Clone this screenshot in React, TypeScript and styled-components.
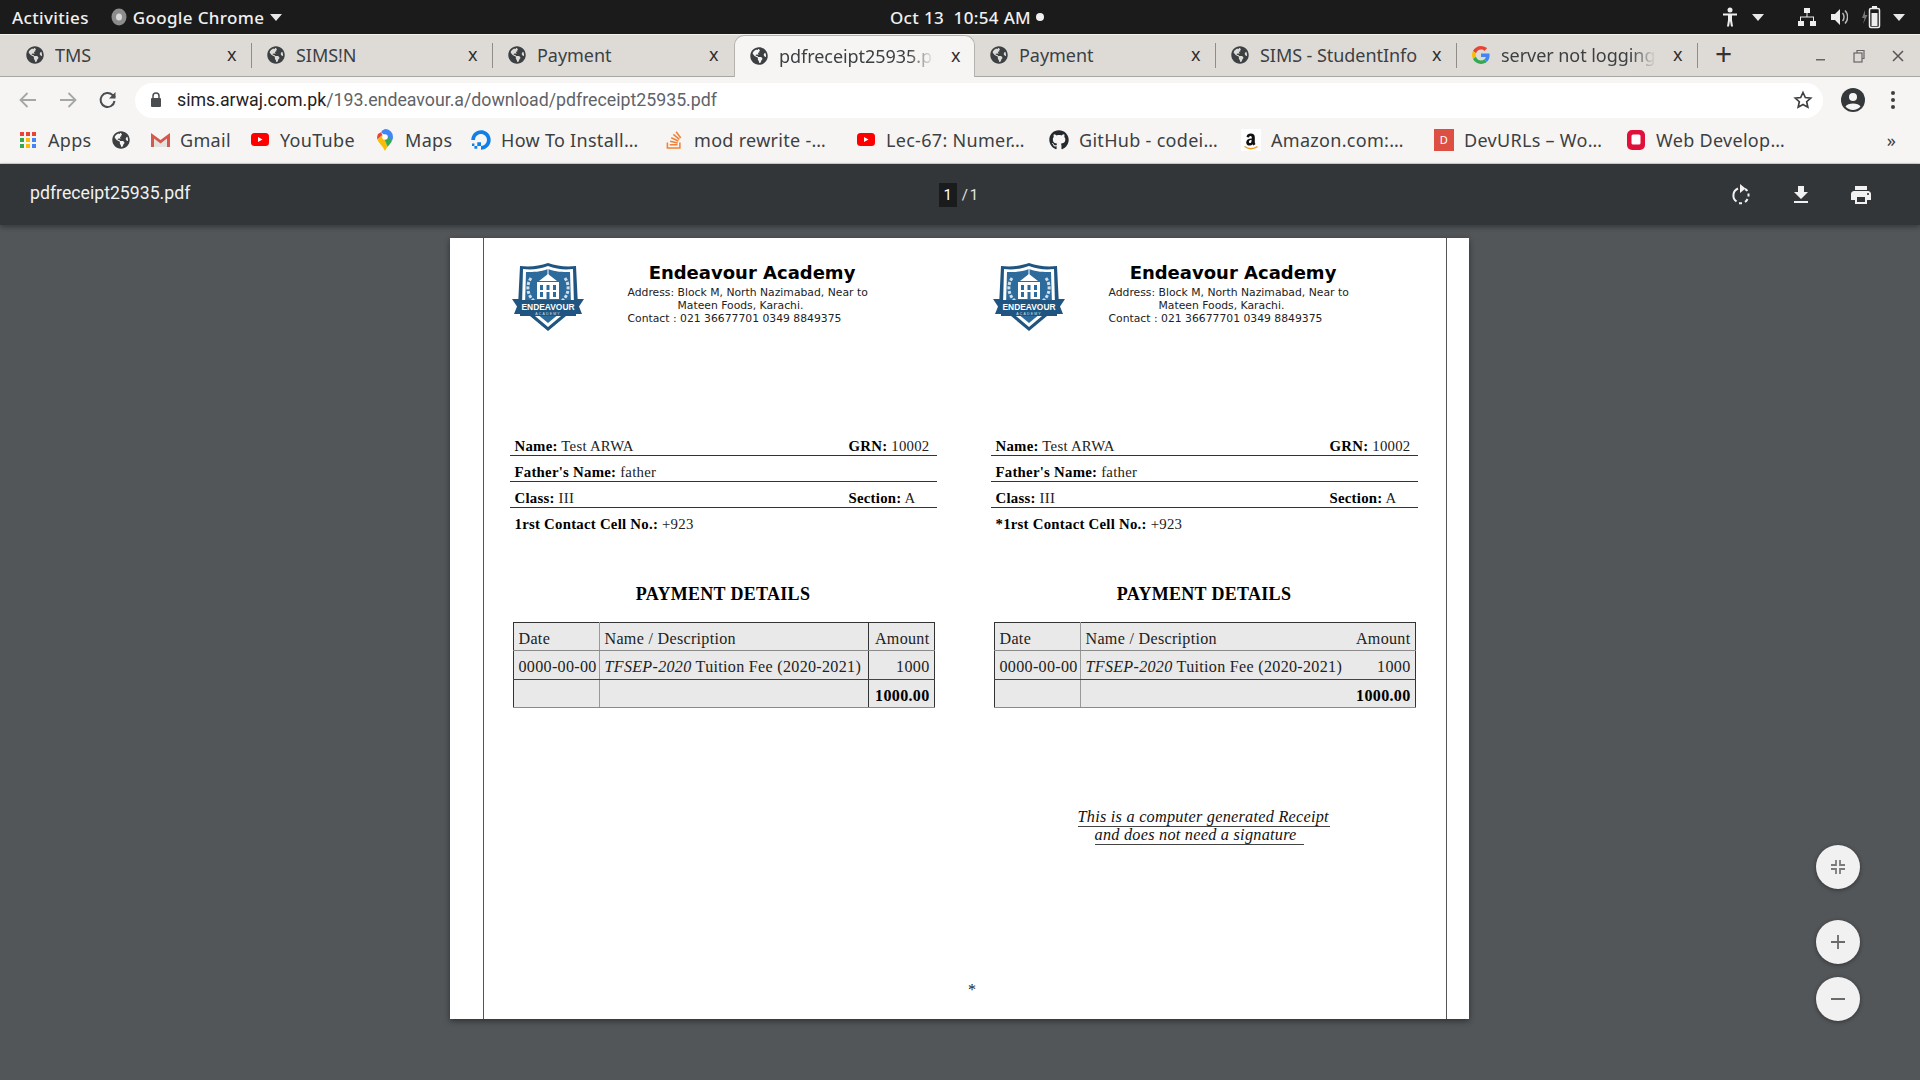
import React from 'react';
import styled, { createGlobalStyle } from 'styled-components';
import { FaDigitalOcean, FaGithub, FaGlobeAmericas, FaStackOverflow } from 'react-icons/fa';

const GlobalStyle = createGlobalStyle`
  html, body { margin: 0; padding: 0; height: 100%; }
  body { background: #525659; font-family: "Noto Sans", sans-serif; overflow: hidden; }
  #root { height: 100%; }
`;

const Screen = styled.div`
  width: 1920px;
  height: 1080px;
  display: flex;
  flex-direction: column;
  position: relative;
  overflow: hidden;
`;

// Ubuntu top bar
const TopBar = styled.div`
  height: 34px;
  background: #1b1b1b;
  color: #f0f0f0;
  display: grid;
  grid-template-columns: 1fr auto 1fr;
  align-items: center;
  font-family: "Noto Sans", sans-serif;
  font-size: 17px;
  letter-spacing: 0.35px;
  font-weight: 500;
  flex: none;
`;
const TopLeft = styled.div`
  display: flex;
  align-items: center;
  padding-left: 12px;
`;
const TopApp = styled.div`
  display: flex;
  align-items: center;
  gap: 6px;
  margin-left: 22px;
`;
const Clock = styled.div`
  display: flex;
  align-items: center;
  gap: 5px;
  padding-left: 14px;
`;
const RecordDot = styled.span`
  width: 8px;
  height: 8px;
  border-radius: 50%;
  background: #f0f0f0;
`;
const TopRight = styled.div`
  display: flex;
  justify-content: flex-end;
  align-items: center;
  padding-right: 15px;
`;
const Tray = styled.span<{ $gap: number }>`
  display: inline-flex;
  margin-left: ${(p) => p.$gap}px;
`;
const Caret = styled.span`
  width: 0;
  height: 0;
  border-left: 6px solid transparent;
  border-right: 6px solid transparent;
  border-top: 7px solid #e8e8e8;
`;

// Chrome tab strip
const TabStrip = styled.div`
  height: 43px;
  background: #dedbd7;
  border-top: 1px solid #f3f1ee;
  border-bottom: 1px solid #a9a7a3;
  box-sizing: border-box;
  display: flex;
  align-items: stretch;
  padding-left: 11px;
  flex: none;
`;
const Tab = styled.div<{ $active?: boolean; $sep?: boolean }>`
  width: 241px;
  box-sizing: border-box;
  display: flex;
  align-items: center;
  position: relative;
  padding: 0 0 2px 15px;
  color: #3c4043;
  font-size: 18px;
  letter-spacing: -0.05px;
  background: ${(p) => (p.$active ? '#f6f5f3' : 'transparent')};
  border-radius: ${(p) => (p.$active ? '10px 10px 0 0' : '0')};
  margin-bottom: ${(p) => (p.$active ? '-1px' : '0')};
  border: ${(p) => (p.$active ? '1px solid #b5b3af' : 'none')};
  border-bottom: none;
  ${(p) =>
    p.$sep
      ? `&::after {
    content: '';
    position: absolute;
    right: 0;
    top: 8px;
    bottom: 8px;
    width: 1px;
    background: #8f8d8a;
  }`
      : ''}
`;
const TabTitle = styled.span<{ $fade?: boolean }>`
  margin-left: 11px;
  width: 158px;
  overflow: hidden;
  white-space: nowrap;
  ${(p) =>
    p.$fade
      ? `-webkit-mask-image: linear-gradient(to right, #000 82%, transparent 98%);
  mask-image: linear-gradient(to right, #000 82%, transparent 98%);`
      : ''}
`;
const TabClose = styled.span`
  position: absolute;
  left: 216px;
  top: 8px;
  font-size: 18px;
  line-height: 22px;
  color: #2e2e2e;
`;
const NewTab = styled.div`
  margin-left: 17px;
  font-size: 30px;
  line-height: 38px;
  color: #333;
`;
const WindowButtons = styled.div`
  margin-left: auto;
  display: flex;
  align-items: center;
  gap: 25px;
  padding-right: 15px;
  color: #555;
`;

// Address bar
const Toolbar = styled.div`
  height: 41px;
  background: #f6f5f3;
  display: flex;
  align-items: center;
  padding-top: 5px;
  box-sizing: border-box;
  flex: none;
`;
const NavButton = styled.span<{ $w: number }>`
  width: ${(p) => p.$w}px;
  display: inline-flex;
  justify-content: center;
  flex: none;
`;
const Omnibox = styled.div`
  width: 1688px;
  height: 35px;
  border-radius: 18px;
  background: #ffffff;
  display: flex;
  align-items: center;
  box-sizing: border-box;
  padding: 0 10px 0 15px;
  font-family: "Roboto", sans-serif;
  font-size: 17.75px;
  color: #5f6368;
  white-space: nowrap;
  flex: none;
`;
const Host = styled.span`
  color: #1f2124;
  margin-left: 15px;
`;
const OmniStar = styled.span`
  margin-left: auto;
  display: inline-flex;
`;

// Bookmarks
const BookmarkBar = styled.div`
  height: 46px;
  background: #f6f5f3;
  border-bottom: 1px solid #d5d3cf;
  box-sizing: border-box;
  display: flex;
  align-items: center;
  padding: 0 0 2px 18px;
  flex: none;
`;
const Bookmark = styled.div<{ $w: number }>`
  width: ${(p) => p.$w}px;
  display: flex;
  align-items: center;
  gap: 10px;
  font-size: 18px;
  letter-spacing: 0.3px;
  color: #3c4043;
  white-space: nowrap;
  flex: none;
`;
const IconSlot = styled.span`
  width: 20px;
  height: 20px;
  display: inline-flex;
  align-items: center;
  justify-content: center;
  flex: none;
`;
const DevIcon = styled.span`
  width: 20px;
  height: 22px;
  background: #dd4f43;
  color: #fff;
  font-size: 11px;
  display: inline-flex;
  align-items: center;
  justify-content: center;
`;
const MoreBookmarks = styled.div`
  margin-left: auto;
  padding-right: 24px;
  font-size: 18px;
  color: #3c4043;
`;

// PDF viewer
const PdfBar = styled.div`
  height: 61px;
  background: #323639;
  color: #f1f1f1;
  display: grid;
  grid-template-columns: 1fr auto 1fr;
  align-items: center;
  box-shadow: 0 2px 5px rgba(0, 0, 0, 0.35);
  position: relative;
  z-index: 2;
  flex: none;
`;
const PdfTitle = styled.div`
  font-family: "Roboto", sans-serif;
  font-size: 17.7px;
  padding-left: 30px;
  margin-top: -3px;
`;
const PageCount = styled.div`
  display: flex;
  align-items: center;
  gap: 5px;
  padding-right: 3px;
  font-family: "Roboto", sans-serif;
  font-size: 15px;
  word-spacing: -2px;
  color: #e4e4e4;
`;
const PageCurrent = styled.span`
  background: #191b1d;
  width: 18px;
  height: 24px;
  display: inline-flex;
  align-items: center;
  justify-content: center;
  color: #fff;
`;
const PdfActions = styled.div`
  display: flex;
  justify-content: flex-end;
  gap: 36px;
  padding-right: 47px;
`;
const Viewer = styled.div`
  flex: 1;
  background: #525659;
  display: flex;
  justify-content: center;
  padding: 13px 2px 0 0;
  min-height: 0;
`;
const Sheet = styled.div`
  width: 1019px;
  height: 781px;
  background: #fff;
  box-shadow: 0 2px 6px rgba(0, 0, 0, 0.45);
  box-sizing: border-box;
  padding: 0 22px 0 33px;
  flex: none;
`;
const Frame = styled.div`
  height: 100%;
  box-sizing: border-box;
  border-left: 1px solid #555;
  border-right: 1px solid #555;
  padding: 25px 27px 0 26px;
  display: flex;
  flex-direction: column;
`;
const Columns = styled.div`
  display: grid;
  grid-template-columns: 427px 427px;
  column-gap: 54px;
`;
const Column = styled.div`
  display: flex;
  flex-direction: column;
`;
const Letterhead = styled.div`
  height: 167px;
  display: flex;
  align-items: flex-start;
  padding-left: 2px;
`;
const LetterText = styled.div`
  margin-left: 44px;
  width: 249px;
  font-family: "DejaVu Sans", sans-serif;
  color: #222;
  font-size: 10.8px;
  line-height: 13px;
`;
const School = styled.div`
  font-size: 18px;
  font-weight: 700;
  line-height: 21px;
  color: #000;
  text-align: center;
  margin: -1px 0 3px;
`;
const AddressLine = styled.div<{ $indent?: number }>`
  padding-left: ${(p) => p.$indent ?? 0}px;
  white-space: nowrap;
`;
const InfoRow = styled.div<{ $rule?: boolean }>`
  height: 26px;
  box-sizing: border-box;
  display: flex;
  justify-content: space-between;
  align-items: center;
  padding: 7px 0 0 5px;
  border-bottom: ${(p) => (p.$rule ? '1.5px solid #333' : 'none')};
  font-family: "Liberation Serif", serif;
  font-size: 14.8px;
  letter-spacing: 0.25px;
  color: #222;
`;
const InfoRight = styled.span`
  width: 88px;
  white-space: nowrap;
`;
const Strong = styled.b`
  color: #000;
`;
const DetailsTitle = styled.h2`
  margin: 47px 0 0;
  height: 26px;
  line-height: 26px;
  text-align: center;
  font-family: "Liberation Serif", serif;
  font-size: 18px;
  font-weight: 700;
  letter-spacing: 0.3px;
  color: #000;
`;
const Payments = styled.table`
  margin: 15px 0 0 3px;
  width: 421px;
  height: 86px;
  border-collapse: collapse;
  table-layout: fixed;
  background: #e9e9e9;
  border: 1.5px solid #333;
  font-family: "Liberation Serif", serif;
  font-size: 16.1px;
  letter-spacing: 0.3px;
  color: #222;
`;
const Cell = styled.td<{ $right?: boolean; $divider?: 'none' | 'light' | 'dark'; $lastRow?: boolean }>`
  padding: 5px 4px 0 5px;
  white-space: nowrap;
  text-align: ${(p) => (p.$right ? 'right' : 'left')};
  border-left: ${(p) =>
    p.$divider === 'none' ? 'none' : `1px solid ${p.$divider === 'dark' ? '#333' : '#999'}`};
  border-bottom: 1px solid ${(p) => (p.$lastRow ? '#444' : '#8a8a8a')};
`;
const Note = styled.div`
  margin: 101px 0 0 87px;
  width: 252px;
  font-family: "Liberation Serif", serif;
  font-style: italic;
  font-size: 16.25px;
  letter-spacing: 0.25px;
  color: #111;
`;
const NoteLine = styled.div<{ $w: number; $indent: number }>`
  width: ${(p) => p.$w}px;
  margin-left: ${(p) => p.$indent}px;
  height: 18px;
  line-height: 17px;
  box-sizing: border-box;
  border-bottom: 1.5px solid #444;
  white-space: nowrap;
`;
const Star = styled.div`
  margin-top: auto;
  margin-bottom: 20px;
  padding-left: 16px;
  text-align: center;
  font-family: "Liberation Serif", serif;
  font-size: 16px;
  color: #222;
`;

// Zoom buttons float over the viewer
const Fab = styled.div<{ $top: number }>`
  position: absolute;
  left: 1816px;
  top: ${(p) => p.$top}px;
  width: 44px;
  height: 44px;
  border-radius: 50%;
  background: #f1f1f1;
  box-shadow: 0 1px 4px rgba(0, 0, 0, 0.4);
  display: flex;
  align-items: center;
  justify-content: center;
`;

const Globe = () => <FaGlobeAmericas size={18} color="#3c4043" />;

const GoogleG = () => (
  <svg width="18" height="18" viewBox="0 0 48 48">
    <path fill="#EA4335" d="M24 9.5c3.5 0 6.7 1.2 9.2 3.6l6.9-6.9C35.9 2.4 30.5 0 24 0 14.6 0 6.5 5.4 2.6 13.2l8 6.2C12.5 13.7 17.8 9.5 24 9.5z" />
    <path fill="#4285F4" d="M46.9 24.5c0-1.6-.1-3.1-.4-4.5H24v9h12.9c-.6 3-2.2 5.5-4.7 7.2l7.7 6c4.5-4.2 7-10.3 7-17.7z" />
    <path fill="#FBBC05" d="M10.5 28.6c-.5-1.4-.8-3-.8-4.6s.3-3.2.8-4.6l-8-6.2C.9 16.5 0 20.1 0 24s.9 7.5 2.6 10.8l7.9-6.2z" />
    <path fill="#34A853" d="M24 48c6.5 0 11.9-2.1 15.9-5.8l-7.7-6c-2.1 1.4-4.9 2.3-8.2 2.3-6.2 0-11.5-4.2-13.4-9.9l-8 6.2C6.5 42.6 14.6 48 24 48z" />
  </svg>
);

const AppsGrid = () => {
  const colors = ['#ea4335', '#ea4335', '#ea4335', '#34a853', '#fbbc05', '#4285f4', '#34a853', '#fbbc05', '#4285f4'];
  return (
    <svg width="16" height="16" viewBox="0 0 16 16">
      {colors.map((c, i) => (
        <rect key={i} x={(i % 3) * 6} y={Math.floor(i / 3) * 6} width="4" height="4" fill={c} />
      ))}
    </svg>
  );
};

const GmailIcon = () => (
  <svg width="19" height="14" viewBox="0 0 19 14">
    <path d="M3 14V3l6.500 5L16 3v11z" fill="#e4e2df" />
    <path d="M0 14V0l9.500 7L19 0v14h-3V5.500L9.500 10.500 3 5.500V14z" fill="#d6584c" />
  </svg>
);

const YouTubeIcon = () => (
  <svg width="18" height="13" viewBox="0 0 18 13">
    <rect width="18" height="13" rx="3.500" fill="#f00" />
    <path d="M7 4v5l4.500-2.500z" fill="#fff" />
  </svg>
);

const MapsIcon = () => (
  <svg width="16" height="22" viewBox="0 0 16 22">
    <path d="M8 0a8 8 0 0 1 8 8c0 1.400-.4 2.600-1 3.700L4 3.200A8 8 0 0 1 8 0z" fill="#4285f4" />
    <path d="M4 3.200 1 5a8 8 0 0 0-.6 5.500l5-4.500z" fill="#ea4335" />
    <path d="M.4 10.500C1.400 14 6 17 8 22c.6-1.600 1.600-3 2.600-4.300L5.500 6z" fill="#fbbc05" />
    <path d="M10.600 17.700c1.800-2 3.600-3.800 4.400-6L10 6 5.500 6z" fill="#34a853" />
    <circle cx="8" cy="8" r="2.800" fill="#fff" />
  </svg>
);

const AmazonIcon = () => (
  <svg width="20" height="22" viewBox="0 0 20 22">
    <rect width="20" height="22" fill="#fff" />
    <path d="M5.500 8c.4-2.400 2-3.400 4.300-3.400 2.700 0 4 1.200 4 3.600v5.300c0 .7.300 1 .7 1.500l-1.800 1.500c-.5-.4-.8-.8-1-1.300-1.100 1-2 1.400-3.200 1.400-2 0-3.300-1.200-3.300-3.200 0-2.600 2.100-3.600 5.600-3.900v-.5c0-1.200-.4-1.900-1.300-1.900-.8 0-1.300.6-1.500 1.300zm5 2.800c-1.600.2-2.600.8-2.600 2 0 .8.400 1.300 1.100 1.300.9 0 1.500-.9 1.500-2.200z" fill="#111" />
    <path d="M3.500 17.500c3.800 2.600 9 2.600 13 .2" fill="none" stroke="#f39a1f" strokeWidth="1.500" />
  </svg>
);

const WebDevIcon = () => (
  <svg width="20" height="22" viewBox="0 0 20 22">
    <rect x="1" y="1" width="18" height="20" rx="5" fill="#e0103a" />
    <rect x="5.500" y="5.500" width="9" height="10" rx="1.500" fill="#fff" />
  </svg>
);

const Shield = () => (
  <svg width="72" height="68" viewBox="0 0 72 68">
    <path d="M36 0c9 3 17 4 28 3l2 40-30 25L6 43 8 3c11 1 19 0 28-3z" fill="#1f5580" />
    <path d="M36 3c8 3 16 4 25 3l1 36-26 22-26-22 1-36c9 1 17 0 25-3z" fill="#fff" />
    <path d="M36 6c8 3 14 3 22 3l1 32-23 19-23-19 1-32c8 0 14 0 22-3z" fill="#2d6b9c" />
    <path d="M19 15c-5 7-4 17 3 23M53 15c5 7 4 17-3 23" fill="none" stroke="#cfe0ec" strokeWidth="3" strokeDasharray="3 1.500" />
    <path d="M36 11l9 7H27z" fill="#fff" />
    <rect x="35.500" y="6" width="1" height="6" fill="#fff" />
    <rect x="25" y="19" width="22" height="17" fill="#fff" />
    <rect x="28" y="22" width="3" height="5" fill="#2d6b9c" />
    <rect x="34.500" y="22" width="3" height="5" fill="#2d6b9c" />
    <rect x="41" y="22" width="3" height="5" fill="#2d6b9c" />
    <rect x="28" y="29" width="3" height="5" fill="#2d6b9c" />
    <rect x="34.500" y="29" width="3" height="7" fill="#2d6b9c" />
    <rect x="41" y="29" width="3" height="5" fill="#2d6b9c" />
    <path d="M0 36h8l2 4v11H2l3-7.500z" fill="#1f5580" />
    <path d="M72 36h-8l-2 4v11h8l-3-7.500z" fill="#1f5580" />
    <rect x="8" y="37" width="56" height="16" fill="#1f5580" />
    <text x="36" y="47" textAnchor="middle" fontFamily="'Liberation Sans', sans-serif" fontSize="9.500" fontWeight="700" fill="#fff" textLength="53" lengthAdjust="spacingAndGlyphs">
      ENDEAVOUR
    </text>
    <text x="36" y="52" textAnchor="middle" fontFamily="'Liberation Sans', sans-serif" fontSize="3.500" fill="#cfe0ec" letterSpacing="1.200">
      ACADEMY
    </text>
  </svg>
);

const tabs = [
  { title: 'TMS', icon: <Globe />, sep: true },
  { title: 'SIMS!N', icon: <Globe />, sep: true },
  { title: 'Payment', icon: <Globe /> },
  { title: 'pdfreceipt25935.pdf', icon: <Globe />, active: true, fade: true },
  { title: 'Payment', icon: <Globe />, sep: true },
  { title: 'SIMS - StudentInfo', icon: <Globe />, sep: true },
  { title: 'server not logging in', icon: <GoogleG />, sep: true, fade: true },
];

const bookmarks = [
  { label: 'Apps', width: 93, icon: <AppsGrid /> },
  { label: '', width: 39, icon: <Globe /> },
  { label: 'Gmail', width: 100, icon: <GmailIcon /> },
  { label: 'YouTube', width: 125, icon: <YouTubeIcon /> },
  { label: 'Maps', width: 96, icon: <MapsIcon /> },
  { label: 'How To Install…', width: 193, icon: <FaDigitalOcean size={20} color="#0f80e8" /> },
  { label: 'mod rewrite -…', width: 192, icon: <FaStackOverflow size={20} color="#ef8236" /> },
  { label: 'Lec-67: Numer…', width: 193, icon: <YouTubeIcon /> },
  { label: 'GitHub - codei…', width: 192, icon: <FaGithub size={20} color="#24292e" /> },
  { label: 'Amazon.com:…', width: 193, icon: <AmazonIcon /> },
  { label: 'DevURLs – Wo…', width: 192, icon: <DevIcon>D</DevIcon> },
  { label: 'Web Develop…', width: 150, icon: <WebDevIcon /> },
];

function Receipt({ cellLabel, note }: { cellLabel: string; note?: boolean }) {
  const amountDivider = note ? 'none' : 'dark';
  return (
    <Column>
      <Letterhead>
        <Shield />
        <LetterText>
          <School>Endeavour Academy</School>
          <AddressLine>Address: Block M, North Nazimabad, Near to</AddressLine>
          <AddressLine $indent={50}>Mateen Foods, Karachi.</AddressLine>
          <AddressLine>Contact : 021 36677701 0349 8849375</AddressLine>
        </LetterText>
      </Letterhead>
      <InfoRow $rule>
        <span><Strong>Name:</Strong> Test ARWA</span>
        <InfoRight><Strong>GRN:</Strong> 10002</InfoRight>
      </InfoRow>
      <InfoRow $rule>
        <span><Strong>Father's Name:</Strong> father</span>
      </InfoRow>
      <InfoRow $rule>
        <span><Strong>Class:</Strong> III</span>
        <InfoRight><Strong>Section:</Strong> A</InfoRight>
      </InfoRow>
      <InfoRow>
        <span><Strong>{cellLabel}</Strong> +923</span>
      </InfoRow>
      <DetailsTitle>PAYMENT DETAILS</DetailsTitle>
      <Payments>
        <colgroup>
          <col style={{ width: 86 }} />
          <col style={{ width: 269 }} />
          <col style={{ width: 66 }} />
        </colgroup>
        <tbody>
          <tr>
            <Cell $divider="none">Date</Cell>
            <Cell>Name / Description</Cell>
            <Cell $right $divider={amountDivider}>Amount</Cell>
          </tr>
          <tr>
            <Cell $divider="none" $lastRow>0000-00-00</Cell>
            <Cell $lastRow><i>TFSEP-2020</i> Tuition Fee (2020-2021)</Cell>
            <Cell $lastRow $right $divider={amountDivider}>1000</Cell>
          </tr>
          <tr>
            <Cell $divider="none" />
            <Cell />
            <Cell $right $divider={amountDivider}><Strong>1000.00</Strong></Cell>
          </tr>
        </tbody>
      </Payments>
      {note && (
        <Note>
          <NoteLine $w={252} $indent={0}>This is a computer generated Receipt</NoteLine>
          <NoteLine $w={209} $indent={17}>and does not need a signature</NoteLine>
        </Note>
      )}
    </Column>
  );
}

export default function App() {
  return (
    <Screen>
      <GlobalStyle />
      <TopBar>
        <TopLeft>
          <span>Activities</span>
          <TopApp>
            <svg width="16" height="18" viewBox="0 0 16 18">
              <ellipse cx="8" cy="9" rx="7.500" ry="8.500" fill="#8c8c8c" />
              <ellipse cx="8" cy="9" rx="3" ry="3.500" fill="#d8d8d8" />
            </svg>
            <span>Google Chrome</span>
            <Caret />
          </TopApp>
        </TopLeft>
        <Clock>
          <span>Oct 13&nbsp;&nbsp;10:54 AM</span>
          <RecordDot />
        </Clock>
        <TopRight>
          <Tray $gap={0}>
            <svg width="16" height="20" viewBox="0 0 16 20" fill="#eee">
              <circle cx="8" cy="3" r="2.500" />
              <path d="M1 6.500h14v2H10v4.500l1 6.500H9L8 14l-1 5.500H5l1-6.500V8.500H1z" />
            </svg>
          </Tray>
          <Tray $gap={14}><Caret /></Tray>
          <Tray $gap={33}>
            <svg width="20" height="20" viewBox="0 0 20 20" fill="#eee">
              <rect x="7" y="1" width="6" height="5" />
              <rect x="1" y="14" width="6" height="5" />
              <rect x="13" y="14" width="6" height="5" />
              <path d="M9.500 6h1v3.500H17V14h-1v-3.500H4V14H3V9.500h6.500z" />
            </svg>
          </Tray>
          <Tray $gap={13}>
            <svg width="18" height="20" viewBox="0 0 18 20" fill="#eee">
              <path d="M1 7h4l5-5v16l-5-5H1z" />
              <path d="M12.500 6c2 2 2 6 0 8M15 3.500c3.500 3.500 3.500 9.500 0 13" fill="none" stroke="#bbb" strokeWidth="1.500" />
            </svg>
          </Tray>
          <Tray $gap={13}>
            <svg width="20" height="24" viewBox="0 0 20 24">
              <path d="M4 5 1 13h2.500L2 19l4.500-9H4z" fill="#777" />
              <rect x="8.500" y="3.500" width="10" height="19" rx="1.500" fill="none" stroke="#eee" strokeWidth="1.500" />
              <rect x="11" y="1" width="5" height="2.500" fill="#eee" />
              <rect x="10.500" y="8" width="6" height="13" fill="#eee" />
            </svg>
          </Tray>
          <Tray $gap={12}><Caret /></Tray>
        </TopRight>
      </TopBar>

      <TabStrip>
        {tabs.map((t, i) => (
          <Tab key={i} $active={t.active} $sep={t.sep}>
            {t.icon}
            <TabTitle $fade={t.fade}>{t.title}</TabTitle>
            <TabClose>x</TabClose>
          </Tab>
        ))}
        <NewTab>+</NewTab>
        <WindowButtons>
          <svg width="12" height="12" viewBox="0 0 12 12"><rect x="1" y="9" width="9" height="1.500" fill="#666" /></svg>
          <svg width="14" height="14" viewBox="0 0 14 14" fill="none" stroke="#666" strokeWidth="1.200">
            <rect x="2" y="4" width="8" height="9" />
            <path d="M5 4V1.500h7v8h-2" />
          </svg>
          <svg width="14" height="14" viewBox="0 0 14 14" stroke="#555" strokeWidth="1.500"><path d="M2 2l10 10M12 2 2 12" /></svg>
        </WindowButtons>
      </TabStrip>

      <Toolbar>
        <NavButton $w={55}>
          <svg width="20" height="20" viewBox="0 0 20 20" fill="none" stroke="#a5a6a8" strokeWidth="1.800">
            <path d="M18 10H3M9.500 3 2.500 10l7 7" />
          </svg>
        </NavButton>
        <NavButton $w={25}>
          <svg width="20" height="20" viewBox="0 0 20 20" fill="none" stroke="#a5a6a8" strokeWidth="1.800">
            <path d="M2 10h15M10.500 3l7 7-7 7" />
          </svg>
        </NavButton>
        <NavButton $w={55}>
          <svg width="20" height="20" viewBox="0 0 20 20" fill="none" stroke="#4a4d50" strokeWidth="2">
            <path d="M16.500 11a7 7 0 1 1-2-6L17 7.500" />
            <path d="M17.500 2v6.500H11" fill="#4a4d50" stroke="none" />
          </svg>
        </NavButton>
        <Omnibox>
          <svg width="12" height="16" viewBox="0 0 12 16">
            <rect x="1" y="6" width="10" height="9" rx="1" fill="#4a4d50" />
            <path d="M3 6.500V4a3 3 0 0 1 6 0v2.500" fill="none" stroke="#4a4d50" strokeWidth="1.500" />
          </svg>
          <Host>sims.arwaj.com.pk</Host>
          <span>/193.endeavour.a/download/pdfreceipt25935.pdf</span>
          <OmniStar>
            <svg width="20" height="20" viewBox="0 0 24 24" fill="none" stroke="#3c4043" strokeWidth="2">
              <path d="M12 3l2.800 6 6.500.7-4.900 4.400 1.400 6.500L12 17.300 6.200 20.600l1.400-6.500L2.700 9.700 9.200 9z" />
            </svg>
          </OmniStar>
        </Omnibox>
        <NavButton $w={60}>
          <svg width="24" height="24" viewBox="0 0 24 24">
            <circle cx="12" cy="12" r="12" fill="#35383b" />
            <circle cx="12" cy="9" r="4" fill="#f6f5f3" />
            <path d="M4.500 18.500c2-4 13-4 15 0a10 10 0 0 1-15 0z" fill="#f6f5f3" />
          </svg>
        </NavButton>
        <NavButton $w={20}>
          <svg width="4" height="18" viewBox="0 0 4 18" fill="#3c4043">
            <circle cx="2" cy="2" r="2" />
            <circle cx="2" cy="9" r="2" />
            <circle cx="2" cy="16" r="2" />
          </svg>
        </NavButton>
      </Toolbar>

      <BookmarkBar>
        {bookmarks.map((b, i) => (
          <Bookmark key={i} $w={b.width}>
            <IconSlot>{b.icon}</IconSlot>
            {b.label && <span>{b.label}</span>}
          </Bookmark>
        ))}
        <MoreBookmarks>»</MoreBookmarks>
      </BookmarkBar>

      <PdfBar>
        <PdfTitle>pdfreceipt25935.pdf</PdfTitle>
        <PageCount>
          <PageCurrent>1</PageCurrent>
          <span>/ 1</span>
        </PageCount>
        <PdfActions>
          <svg width="24" height="24" viewBox="0 0 24 24" fill="none" stroke="#f1f1f1" strokeWidth="2">
            <path d="M9 5.500a7.500 7.500 0 0 0-1.500 13M10 20.300h3M16 19a7.500 7.500 0 0 0 2.500-3M19.500 13.500v-3M18.400 8A7.500 7.500 0 0 0 16 6" />
            <path d="M11 1v9l5.500-4.500z" fill="#f1f1f1" stroke="none" />
          </svg>
          <svg width="24" height="24" viewBox="0 0 24 24" fill="#f1f1f1">
            <path d="M19 9h-4V3H9v6H5l7 7zM5 18v2h14v-2z" />
          </svg>
          <svg width="24" height="24" viewBox="0 0 24 24" fill="#f1f1f1">
            <path d="M19 8H5c-1.660 0-3 1.340-3 3v6h4v4h12v-4h4v-6c0-1.660-1.340-3-3-3zm-3 11H8v-5h8v5zm3-7c-.55 0-1-.45-1-1s.45-1 1-1 1 .45 1 1-.45 1-1 1zm-1-9H6v4h12V3z" />
          </svg>
        </PdfActions>
      </PdfBar>

      <Viewer>
        <Sheet>
          <Frame>
            <Columns>
              <Receipt cellLabel="1rst Contact Cell No.:" />
              <Receipt cellLabel="*1rst Contact Cell No.:" note />
            </Columns>
            <Star>*</Star>
          </Frame>
        </Sheet>
      </Viewer>

      <Fab $top={845}>
        <svg width="18" height="18" viewBox="0 0 18 18" fill="none" stroke="#7a7a7a" strokeWidth="1.800">
          <path d="M7 2v5H2M11 2v5h5M7 16v-5H2M11 16v-5h5" />
        </svg>
      </Fab>
      <Fab $top={920}>
        <svg width="16" height="16" viewBox="0 0 16 16" stroke="#6a6a6a" strokeWidth="1.800"><path d="M8 1v14M1 8h14" /></svg>
      </Fab>
      <Fab $top={977}>
        <svg width="16" height="16" viewBox="0 0 16 16" stroke="#6a6a6a" strokeWidth="2"><path d="M1 8h14" /></svg>
      </Fab>
    </Screen>
  );
}
